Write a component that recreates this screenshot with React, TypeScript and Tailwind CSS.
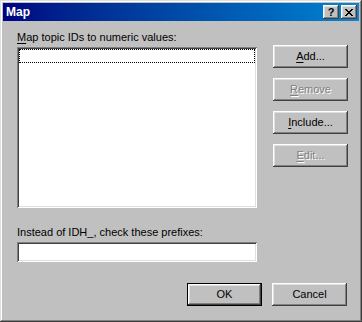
import React from "react";

const font = { fontFamily: '"Liberation Sans", Arial, sans-serif' };

function Btn({
  children,
  disabled,
  isDefault,
}: {
  children: React.ReactNode;
  disabled?: boolean;
  isDefault?: boolean;
}) {
  const bevel =
    "shadow-[inset_-1px_-1px_#404040,inset_1px_1px_#ffffff,inset_-2px_-2px_#808080,inset_2px_2px_#dfdfdf]";
  const inner = (
    <div
      className={`flex items-center justify-center bg-[#c0c0c0] ${bevel} ${
        isDefault ? "h-[21px] w-[73px]" : "h-[23px] w-[75px]"
      } text-[11px] ${
        disabled
          ? "text-[#808080] [text-shadow:1px_1px_0_#ffffff]"
          : "text-black"
      }`}
    >
      {children}
    </div>
  );
  if (isDefault) {
    return <div className="h-[23px] w-[75px] border border-black">{inner}</div>;
  }
  return inner;
}

export default function App() {
  return (
    <div
      className="relative h-[322px] w-[362px] bg-[#c0c0c0] p-[3px] shadow-[inset_-1px_-1px_#404040,inset_1px_1px_#dfdfdf,inset_-2px_-2px_#808080,inset_2px_2px_#ffffff]"
      style={font}
    >
      {/* Title bar */}
      <div className="flex h-[18px] items-center justify-between bg-gradient-to-r from-[#000080] to-[#1084d0] pl-[3px] pr-[2px]">
        <span className="text-[12px] font-bold leading-none text-white">Map</span>
        <div className="flex gap-[2px]">
          <div className="flex h-[14px] w-[16px] items-center justify-center bg-[#c0c0c0] shadow-[inset_-1px_-1px_#404040,inset_1px_1px_#ffffff,inset_-2px_-2px_#808080,inset_2px_2px_#dfdfdf]">
            <span className="text-[11px] font-bold leading-none text-black">?</span>
          </div>
          <div className="flex h-[14px] w-[16px] items-center justify-center bg-[#c0c0c0] shadow-[inset_-1px_-1px_#404040,inset_1px_1px_#ffffff,inset_-2px_-2px_#808080,inset_2px_2px_#dfdfdf]">
            <svg width="8" height="7" viewBox="0 0 8 7" shapeRendering="crispEdges">
              <path
                d="M0 0h2v1h-2zM6 0h2v1h-2zM1 1h2v1h-2zM5 1h2v1h-2zM2 2h4v1h-4zM3 3h2v1h-2zM2 4h4v1h-4zM1 5h2v1h-2zM5 5h2v1h-2zM0 6h2v1h-2zM6 6h2v1h-2z"
                fill="#000"
              />
            </svg>
          </div>
        </div>
      </div>

      {/* Body */}
      <div className="flex">
        <div className="ml-[14px] flex w-[240px] flex-col pt-[8px]">
          <div className="h-[16px] text-[11px] leading-[16px] text-black">
            <span className="underline underline-offset-2">M</span>ap topic IDs to numeric values:
          </div>
          <div className="mt-[2px] h-[161px] bg-white p-[2px] shadow-[inset_1px_1px_#808080,inset_-1px_-1px_#ffffff,inset_2px_2px_#404040,inset_-2px_-2px_#dfdfdf]">
            <div className="h-[14px] border border-dotted border-black" />
          </div>
          <div className="mt-[16px] h-[16px] text-[11px] leading-[16px] text-black">
            Instead of IDH_, check these prefixes:
          </div>
          <div className="mt-[2px] h-[20px] bg-white shadow-[inset_1px_1px_#808080,inset_-1px_-1px_#ffffff,inset_2px_2px_#404040,inset_-2px_-2px_#dfdfdf]" />
        </div>
        <div className="ml-[16px] flex flex-col gap-[10px] pt-[24px]">
          <Btn>
            <span className="underline underline-offset-2">A</span>dd...
          </Btn>
          <Btn disabled>
            <span className="underline underline-offset-2">R</span>emove
          </Btn>
          <Btn>
            <span className="underline underline-offset-2">I</span>nclude...
          </Btn>
          <Btn disabled>
            <span className="underline underline-offset-2">E</span>dit...
          </Btn>
        </div>
      </div>

      {/* Bottom buttons */}
      <div className="mt-[21px] flex justify-end gap-[10px] pr-[12px]">
        <Btn isDefault>OK</Btn>
        <Btn>Cancel</Btn>
      </div>
    </div>
  );
}
